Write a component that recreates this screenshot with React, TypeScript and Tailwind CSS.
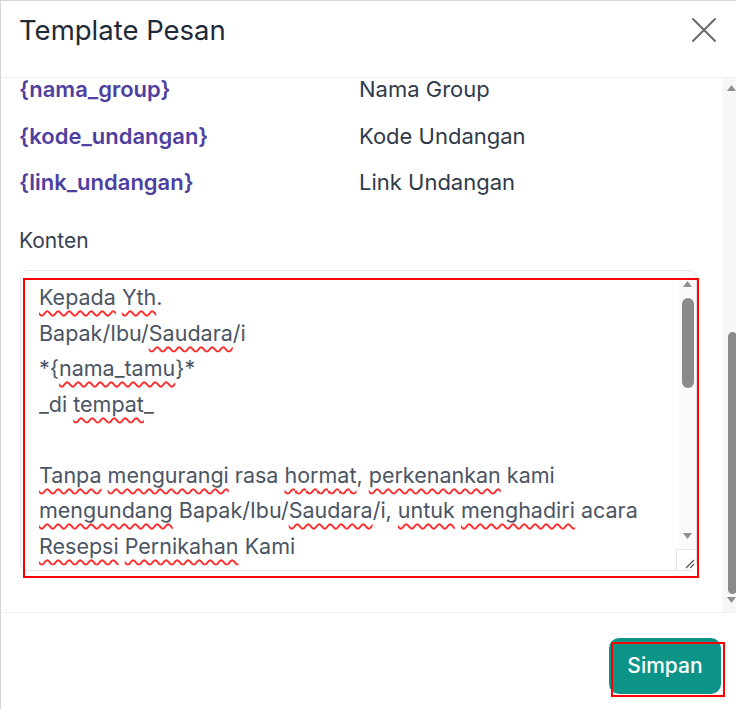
import React from "react";

const W = ({ children }: { children: React.ReactNode }) => (
  <span className="underline decoration-wavy decoration-[#ff2a2a] decoration-[1.5px] underline-offset-[5px]">{children}</span>
);

const Up = ({ cls }: { cls: string }) => (
  <svg width="9" height="6" viewBox="0 0 9 6" className={cls}>
    <polygon points="4.5,0 9,6 0,6" fill="#8f8f8f" />
  </svg>
);
const Down = ({ cls }: { cls: string }) => (
  <svg width="9" height="6" viewBox="0 0 9 6" className={cls}>
    <polygon points="0,0 9,0 4.5,6" fill="#8f8f8f" />
  </svg>
);

const vars: [string, string][] = [
  ["{nama_group}", "Nama Group"],
  ["{kode_undangan}", "Kode Undangan"],
  ["{link_undangan}", "Link Undangan"],
];

export default function App() {
  return (
    <div
      className="w-[736px] h-[709px] overflow-hidden bg-white border-l border-t border-[#d6d6d6] flex flex-col"
      style={{ fontFamily: "Inter, 'Noto Sans', sans-serif" }}
    >
      {/* header */}
      <div className="h-[77px] shrink-0 border-b border-[#f1f1f3] flex items-start justify-between pl-[18px] pr-[19px] pt-[11px]">
        <h1 className="text-[27.5px] leading-[36px] text-[#1f2937] font-normal">Template Pesan</h1>
        <svg width="26" height="26" viewBox="0 0 26 26" className="mt-[5px]">
          <path d="M2 2 L24 24 M24 2 L2 24" stroke="#6b6b6b" strokeWidth="2" strokeLinecap="round" />
        </svg>
      </div>

      {/* body */}
      <div className="h-[534px] shrink-0 flex">
        <div className="flex-1 overflow-hidden flex flex-col justify-end pl-[19px] pr-[25px] pb-[41px]">
          {vars.map(([k, v]) => (
            <div key={k} className="shrink-0 -ml-[1px] h-[46.5px] flex items-center text-[22px]">
              <span className="w-[340px] font-semibold text-[#4e3fa0]">{k}</span>
              <span className="text-[#2f3a4a]">{v}</span>
            </div>
          ))}
          <div className="shrink-0 -ml-[1px] mt-[21px] text-[21px] leading-[28px] text-[#374151]">Konten</div>
          <div className="shrink-0 relative mt-[15px] h-[301px] border border-[#e3e5e8] rounded-lg flex">
            <div className="flex-1 overflow-hidden pt-[9px] pl-[18px] text-[21.5px] leading-[35.5px] text-[#4b5563] whitespace-pre-wrap">
              <div><W>Kepada</W> <W>Yth</W>.</div>
              <div>Bapak/Ibu/<W>Saudara</W>/i</div>
              <div>*{"{"}<W>nama_tamu</W>{"}"}*</div>
              <div>_di <W>tempat</W>_</div>
              <div>&nbsp;</div>
              <div><W>Tanpa</W> <W>mengurangi</W> rasa <W>hormat</W>, <W>perkenankan</W> kami</div>
              <div><W>mengundang</W> Bapak/Ibu/<W>Saudara</W>/i, <W>untuk</W> <W>menghadiri</W> acara</div>
              <div><W>Resepsi</W> <W>Pernikahan</W> Kami</div>
              <div>&nbsp;</div>
              <div>Berikut link undangan kami:</div>
              <div>{"{link_undangan}"}</div>
            </div>
            <div className="w-[17px] bg-[#fafafa] flex flex-col items-center rounded-r-lg">
              <Up cls="mt-[10px]" />
              <div className="mt-[11px] w-[12px] h-[90px] rounded-full bg-[#8b8b8b]" />
              <div className="flex-1" />
              <Down cls="mb-[10px]" />
              <div className="w-[20px] h-[21px] self-end border-l border-t border-[#e6e6e6] bg-white relative">
                <svg width="12" height="12" viewBox="0 0 12 12" className="absolute right-[1px] bottom-[1px]">
                  <path d="M11 3 L3 11 M11 7 L7 11" stroke="#555" strokeWidth="1.2" />
                </svg>
              </div>
            </div>
            <div className="absolute left-[2px] top-[7px] w-[676px] h-[300px] border-2 border-[#ff0000] pointer-events-none" />
          </div>
        </div>
        <div className="w-[14px] bg-[#f7f7f7] flex flex-col">
          <Up cls="mt-[7px] ml-[5px]" />
          <div className="mt-[241px] ml-[6px] w-[9px] h-[262px] rounded-full bg-[#8b8b8b]" />
          <Down cls="mt-[3px] ml-[5px]" />
        </div>
      </div>

      {/* footer */}
      <div className="flex-1 border-t border-[#f1f1f3] flex justify-end items-start pr-[15px] pt-[25px]">
        <div className="relative">
          <button className="w-[112px] h-[56px] rounded-[10px] bg-[#0d9488] text-white text-[21px] font-medium">
            Simpan
          </button>
          <div className="absolute left-[2px] top-[4px] w-[114px] h-[55px] border-2 border-[#ff0000] pointer-events-none" />
        </div>
      </div>
    </div>
  );
}
